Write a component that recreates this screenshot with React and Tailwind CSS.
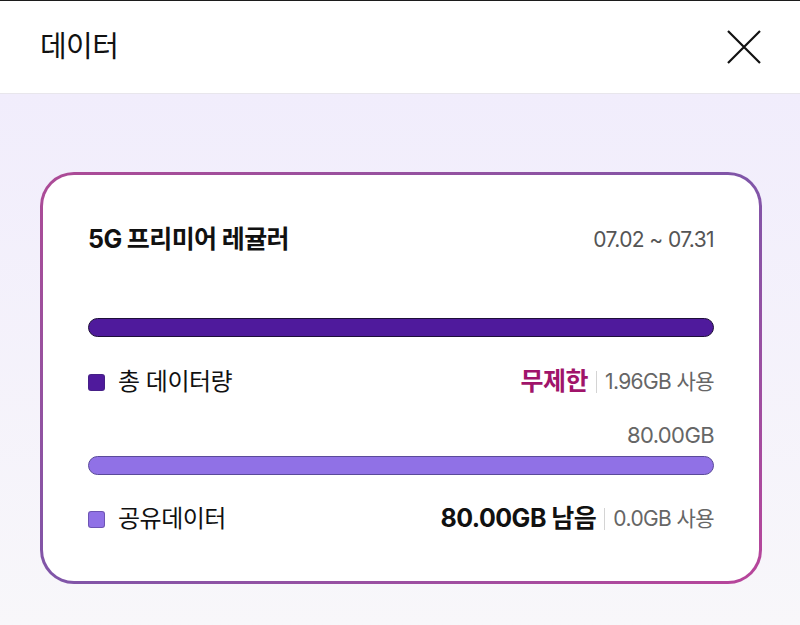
import React from 'react';

const font = { fontFamily: 'Inter, "Noto Sans CJK KR", sans-serif' };

const LegendRow = ({ color, label, main, mainClass, used }) => (
  <div className="flex items-center justify-between h-[28px]">
    <div className="flex items-center">
      <span className={`w-[17px] h-[17px] rounded-[3px] border border-[#3a2a6a]/40 ${color}`} />
      <span className="ml-[13px] text-[24px] text-[#111] tracking-[-0.5px]">{label}</span>
    </div>
    <div className="flex items-center">
      <span className={`font-bold tracking-[-0.5px] ${mainClass}`}>{main}</span>
      <span className="mx-[8px] w-px h-[22px] bg-[#d4d4d4]" />
      <span className="text-[21px] text-[#666] tracking-[-0.6px]">{used}</span>
    </div>
  </div>
);

export default function App() {
  return (
    <div className="w-[800px] h-[625px] flex flex-col overflow-hidden" style={font}>
      {/* Header */}
      <div className="h-[94px] shrink-0 bg-white border-t border-t-[#1c1c1c] border-b border-b-[#e8e6ec] flex items-center justify-between pl-[40px] pr-[38px]">
        <span className="text-[29px] text-[#111] tracking-[-0.6px]">데이터</span>
        <svg width="36" height="36" viewBox="0 0 36 36" fill="none" stroke="#111" strokeWidth="2.2">
          <path d="M2 2L34 34M34 2L2 34" />
        </svg>
      </div>

      {/* Body */}
      <div className="flex-1 bg-gradient-to-b from-[#f1edfc] to-[#f8f7fa] px-[40px] pt-[78px]">
        <div className="w-[722px] rounded-[34px] p-[3px] bg-gradient-to-br from-[#ad4a96] via-[#7f55a8] to-[#b8449a]">
          <div className="bg-white rounded-[31px] px-[45px] pt-[50px] pb-[48px]">
            <div className="flex items-center justify-between h-[30px]">
              <span className="text-[25px] font-bold text-[#111] tracking-[-0.6px]">5G 프리미어 레귤러</span>
              <span className="text-[21px] text-[#555] tracking-[-0.6px]">07.02 ~ 07.31</span>
            </div>

            <div className="mt-[63px] h-[19px] rounded-full bg-[#4f1a9c] border border-[#1e0f3a]" />

            <div className="mt-[31px]">
              <LegendRow color="bg-[#4f1a9c]" label="총 데이터량" main="무제한" mainClass="text-[25px] text-[#a0146a]" used="1.96GB 사용" />
            </div>

            <div className="mt-[26px] h-[26px] flex items-center justify-end text-[22px] text-[#666] tracking-[-0.6px]">80.00GB</div>

            <div className="mt-[8px] h-[19px] rounded-full bg-[#9071e6] border border-[#5a4a9a]" />

            <div className="mt-[30px]">
              <LegendRow color="bg-[#9071e6]" label="공유데이터" main="80.00GB 남음" mainClass="text-[25px] text-[#111]" used="0.0GB 사용" />
            </div>
          </div>
        </div>
      </div>
    </div>
  );
}
